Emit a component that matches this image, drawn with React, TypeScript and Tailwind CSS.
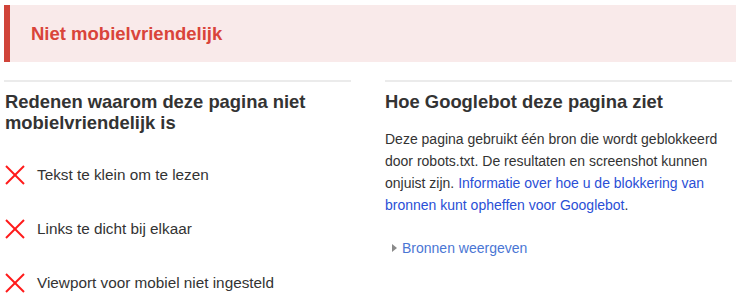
import React from "react";

function XIcon() {
  return (
    <svg width="20" height="20" viewBox="0 0 20 20" className="shrink-0">
      <line x1="1" y1="1" x2="19" y2="19" stroke="#ff1a1a" strokeWidth="2" />
      <line x1="19" y1="1" x2="1" y2="19" stroke="#ff1a1a" strokeWidth="2" />
    </svg>
  );
}

const items = [
  "Tekst te klein om te lezen",
  "Links te dicht bij elkaar",
  "Viewport voor mobiel niet ingesteld",
];

export default function App() {
  return (
    <div
      className="w-[736px] h-[294px] overflow-hidden bg-white text-[#333]"
      style={{ fontFamily: '"Liberation Sans", Arial, sans-serif' }}
    >
      <div className="pt-[5px] pl-1">
        <div className="flex h-[57px] items-center bg-[#f9eaea] border-l-[6px] border-[#d0443a] pl-[21px]">
          <span className="text-[18.5px] font-bold text-[#d9443a]">Niet mobielvriendelijk</span>
        </div>
      </div>
      <div className="mt-[18px] flex gap-[34px] px-1">
        <div className="w-[347px] border-t-2 border-[#ebebeb] pt-[9px]">
          <h2 className="pl-px text-[18.4px] font-bold leading-[21px] text-[#333]">
            Redenen waarom deze pagina niet
            <br />
            mobielvriendelijk is
          </h2>
          <ul className="mt-[32px] flex flex-col gap-[34px]">
            {items.map((t) => (
              <li key={t} className="flex h-5 items-center pl-px">
                <XIcon />
                <span className="ml-3 text-[15.3px] leading-5 text-[#333]">{t}</span>
              </li>
            ))}
          </ul>
        </div>
        <div className="w-[347px] border-t-2 border-[#ebebeb] pt-[9px]">
          <h2 className="text-[18.4px] font-bold leading-[21px] text-[#333]">Hoe Googlebot deze pagina ziet</h2>
          <p className="mt-[16px] text-[14px] leading-[22px] text-[#333]">
            Deze pagina gebruikt één bron die wordt geblokkeerd door robots.txt. De resultaten en screenshot kunnen
            onjuist zijn.{" "}
            <a className="text-[#2a4fd6]">
              Informatie over hoe u de blokkering van bronnen kunt opheffen voor Googlebot
            </a>
            .
          </p>
          <div className="mt-[22px] flex h-5 items-center pl-[7px]">
            <svg width="5" height="8" viewBox="0 0 5 8" className="shrink-0">
              <polygon points="0,0 5,4 0,8" fill="#8a8a8a" />
            </svg>
            <span className="ml-[5px] text-[14px] leading-5 text-[#4a76d4]">Bronnen weergeven</span>
          </div>
        </div>
      </div>
    </div>
  );
}
